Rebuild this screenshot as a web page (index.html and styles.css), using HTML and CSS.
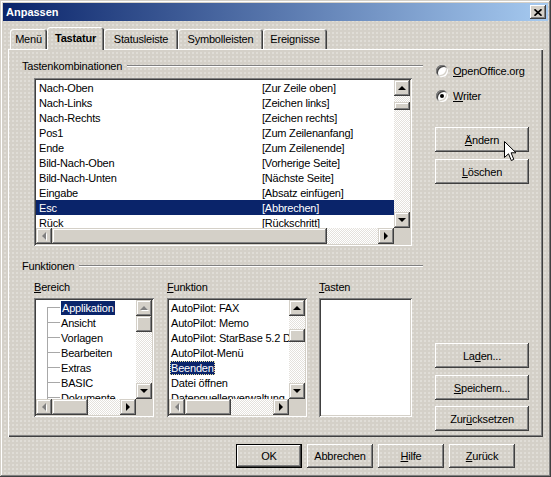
FILE: index.html
```html
<!DOCTYPE html>
<html lang="de">
<head>
  <meta charset="UTF-8">
  <title>Anpassen</title>
  <link rel="stylesheet" href="styles.css">
</head>
<body>
  <div class="window">
    <div class="titlebar">
      <span class="title">Anpassen</span>
      <span class="close">
        <svg width="8" height="7" viewBox="0 0 8 7"><path d="M0.5 0.3L7.5 6.7M7.5 0.3L0.5 6.7" stroke="#000" stroke-width="1.7" fill="none"/></svg>
      </span>
    </div>

    <div class="body">
      <div class="tabs">
        <div class="tab t-menu">Menü</div>
        <div class="tab t-tast active">Tastatur</div>
        <div class="tab t-status">Statusleiste</div>
        <div class="tab t-symbol">Symbolleisten</div>
        <div class="tab t-event">Ereignisse</div>
      </div>

      <div class="panel">
        <div class="section upper">
          <div class="main">
            <div class="group-title"><span>Tastenkombinationen</span><span class="rule"></span></div>
            <div class="listbox keylist">
              <div class="rows">
                <div class="row"><span class="key">Nach-Oben</span><span>[Zur Zeile oben]</span></div>
                <div class="row"><span class="key">Nach-Links</span><span>[Zeichen links]</span></div>
                <div class="row"><span class="key">Nach-Rechts</span><span>[Zeichen rechts]</span></div>
                <div class="row"><span class="key">Pos1</span><span>[Zum Zeilenanfang]</span></div>
                <div class="row"><span class="key">Ende</span><span>[Zum Zeilenende]</span></div>
                <div class="row"><span class="key">Bild-Nach-Oben</span><span>[Vorherige Seite]</span></div>
                <div class="row"><span class="key">Bild-Nach-Unten</span><span>[Nächste Seite]</span></div>
                <div class="row"><span class="key">Eingabe</span><span>[Absatz einfügen]</span></div>
                <div class="row sel"><span class="key">Esc</span><span>[Abbrechen]</span></div>
                <div class="row"><span class="key">Rück</span><span>[Rückschritt]</span></div>
              </div>
              <div class="vscroll">
                <span class="sbtn"><i class="arrow up"></i></span>
                <span class="track"><span class="thumb" style="height:8px;margin-top:6px"></span></span>
                <span class="sbtn"><i class="arrow down"></i></span>
              </div>
              <div class="hscroll">
                <span class="sbtn"><i class="arrow left off"></i></span>
                <span class="track"><span class="thumb" style="width:275px"></span></span>
                <span class="sbtn"><i class="arrow right"></i></span>
              </div>
              <div class="corner"></div>
            </div>
          </div>

          <div class="side">
            <div class="radio first"><span class="circle"></span><span><u>O</u>penOffice.org</span></div>
            <div class="radio second"><span class="circle"><span class="dot"></span></span><span><u>W</u>riter</span></div>
            <div class="btn b-change"><span><u>Ä</u>ndern</span></div>
            <div class="btn b-delete"><span><u>L</u>öschen</span></div>
          </div>
        </div>

        <div class="section lower">
          <div class="main">
            <div class="group-title"><span>Funktionen</span><span class="rule"></span></div>
            <div class="cols">
              <div class="col c-area">
                <div class="label"><u>B</u>ereich</div>
                <div class="listbox small tree">
                  <div class="rows">
                    <div class="row"><span class="hl">Applikation</span></div>
                    <div class="row"><span>Ansicht</span></div>
                    <div class="row"><span>Vorlagen</span></div>
                    <div class="row"><span>Bearbeiten</span></div>
                    <div class="row"><span>Extras</span></div>
                    <div class="row"><span>BASIC</span></div>
                    <div class="row"><span>Dokumente</span></div>
                  </div>
                  <div class="vscroll">
                    <span class="sbtn"><i class="arrow up off"></i></span>
                    <span class="track"><span class="thumb" style="height:16px"></span></span>
                    <span class="sbtn"><i class="arrow down"></i></span>
                  </div>
                  <div class="hscroll">
                    <span class="sbtn"><i class="arrow left off"></i></span>
                    <span class="track"><span class="thumb" style="width:36px"></span></span>
                    <span class="sbtn"><i class="arrow right"></i></span>
                  </div>
                  <div class="corner"></div>
                </div>
              </div>

              <div class="col c-func">
                <div class="label"><u>F</u>unktion</div>
                <div class="listbox small funcs">
                  <div class="rows">
                    <div class="row"><span>AutoPilot: FAX</span></div>
                    <div class="row"><span>AutoPilot: Memo</span></div>
                    <div class="row"><span>AutoPilot: StarBase 5.2 Datenbank</span></div>
                    <div class="row"><span>AutoPilot-Menü</span></div>
                    <div class="row"><span class="hl focus">Beenden</span></div>
                    <div class="row"><span>Datei öffnen</span></div>
                    <div class="row"><span>Datenquellenverwaltung</span></div>
                  </div>
                  <div class="vscroll">
                    <span class="sbtn"><i class="arrow up"></i></span>
                    <span class="track"><span class="thumb" style="height:13px;margin-top:13px"></span></span>
                    <span class="sbtn"><i class="arrow down"></i></span>
                  </div>
                  <div class="hscroll">
                    <span class="sbtn"><i class="arrow left off"></i></span>
                    <span class="track"><span class="thumb" style="width:46px"></span></span>
                    <span class="sbtn"><i class="arrow right"></i></span>
                  </div>
                  <div class="corner"></div>
                </div>
              </div>

              <div class="col c-keys">
                <div class="label"><u>T</u>asten</div>
                <div class="listbox small empty"></div>
              </div>
            </div>
          </div>

          <div class="side">
            <div class="btn b-load"><span>La<u>d</u>en...</span></div>
            <div class="btn b-save"><span><u>S</u>peichern...</span></div>
            <div class="btn b-reset"><span>Zur<u>ü</u>cksetzen</span></div>
          </div>
        </div>
      </div>

      <div class="footer">
        <div class="btn default">OK</div>
        <div class="btn">Abbrechen</div>
        <div class="btn"><span><u>H</u>ilfe</span></div>
        <div class="btn"><span><u>Z</u>urück</span></div>
      </div>
    </div>

    <svg class="cursor" width="13" height="21" viewBox="0 0 13 21">
      <polygon points="0.5,0.5 0.5,16.5 4.5,12.8 7.3,19.5 9.8,18.4 7.1,11.8 12,11.8" fill="#fff" stroke="#000" stroke-width="1"/>
    </svg>
  </div>
</body>
</html>
```

FILE: styles.css
```css
* { box-sizing: border-box; }

body {
  margin: 0;
  font-family: "Liberation Sans", Arial, sans-serif;
  font-size: 11px;
  letter-spacing: -0.2px;
  color: #000;
  background: #d4d0c8;
}

u {
  text-decoration: underline;
  text-underline-offset: 1px;
}

.window {
  position: relative;
  width: 551px;
  height: 477px;
  padding: 3px;
  background-color: #d4d0c8;
  background-image: radial-gradient(circle at 1px 1px, #e0ddd7 0.7px, transparent 1px);
  background-size: 4px 4px;
  box-shadow: inset -1px -1px #404040, inset 1px 1px #d4d0c8, inset -2px -2px #808080, inset 2px 2px #fff;
}

.titlebar {
  height: 18px;
  display: flex;
  align-items: center;
  justify-content: space-between;
  padding: 0 2px 0 3px;
  background: linear-gradient(90deg, #0a246a, #a6caf0);
  color: #fff;
  font-weight: bold;
  letter-spacing: 0;
}

.close {
  width: 16px;
  height: 14px;
  display: flex;
  align-items: center;
  justify-content: center;
  background: #d4d0c8;
  box-shadow: inset -1px -1px #404040, inset 1px 1px #fff, inset -2px -2px #808080;
}

.body { padding: 6px 5px 0; }

/* tabs */
.tabs {
  position: relative;
  z-index: 1;
  display: flex;
  align-items: flex-end;
  height: 22px;
  padding-left: 2px;
}
.tab {
  height: 20px;
  display: flex;
  align-items: center;
  justify-content: center;
  border-radius: 3px 3px 0 0;
  box-shadow: inset 1px 1px #fff, inset -1px 0 #404040, inset -2px 0 #808080;
}
.tab.active {
  height: 23px;
  margin-bottom: -1px;
  padding-bottom: 2px;
  font-weight: bold;
  background-color: #d4d0c8;
  background-image: radial-gradient(circle at 1px 1px, #e0ddd7 0.7px, transparent 1px);
  background-size: 4px 4px;
}
.t-menu { width: 37px; }
.t-tast { width: 57px; }
.t-status { width: 74px; }
.t-symbol { width: 85px; }
.t-event { width: 64px; }

.panel {
  height: 388px;
  padding: 11px 0 0 14px;
  box-shadow: inset 1px 1px #fff, inset -1px -1px #404040, inset -2px -2px #808080;
}

.section { display: flex; }
.lower { margin-top: 14px; }
.main { width: 403px; }

.group-title {
  display: flex;
  align-items: center;
  height: 12px;
}
.rule {
  flex: 1;
  height: 2px;
  margin: 0 2px 0 5px;
  border-top: 1px solid #808080;
  border-bottom: 1px solid #fff;
}

/* list boxes */
.listbox {
  display: grid;
  grid-template-columns: 1fr 16px;
  grid-template-rows: 1fr 16px;
  padding: 2px;
  background: #fff;
  box-shadow: inset 1px 1px #808080, inset -1px -1px #fff, inset 2px 2px #404040, inset -2px -2px #d4d0c8;
}
.keylist {
  width: 378px;
  height: 168px;
  margin: 6px 0 0 12px;
}
.rows {
  overflow: hidden;
  min-width: 0;
  min-height: 0;
}
.row {
  display: flex;
  align-items: center;
  height: 15px;
  white-space: nowrap;
}
.keylist .row { padding-left: 3px; }
.key { width: 223px; }
.row.sel {
  background: #0a246a;
  color: #fff;
}

.vscroll {
  display: flex;
  flex-direction: column;
}
.hscroll { display: flex; }
.sbtn {
  flex: none;
  width: 16px;
  height: 16px;
  display: flex;
  align-items: center;
  justify-content: center;
  background: #d4d0c8;
  box-shadow: inset -1px -1px #404040, inset 1px 1px #d4d0c8, inset -2px -2px #808080, inset 2px 2px #fff;
}
.track {
  flex: 1;
  display: flex;
  background: repeating-conic-gradient(#e4e1dc 0 25%, #fff 0 50%) 0 0 / 2px 2px;
}
.vscroll .track { flex-direction: column; }
.thumb {
  flex: none;
  background: #d4d0c8;
  box-shadow: inset -1px -1px #404040, inset 1px 1px #d4d0c8, inset -2px -2px #808080, inset 2px 2px #fff;
}
.vscroll .thumb { width: 16px; }
.hscroll .thumb { height: 16px; }
.corner { background: #d4d0c8; }

.arrow {
  width: 0;
  height: 0;
  border: 4px solid transparent;
  color: #000;
}
.arrow.up { border-top-width: 0; border-bottom-color: currentColor; }
.arrow.down { border-bottom-width: 0; border-top-color: currentColor; }
.arrow.left { border-left-width: 0; border-right-color: currentColor; margin-left: -1px; }
.arrow.right { border-right-width: 0; border-left-color: currentColor; }
.arrow.off {
  color: #808080;
  filter: drop-shadow(1px 1px 0 #fff);
}

/* right column */
.side {
  width: 94px;
  margin-left: 10px;
  display: flex;
  flex-direction: column;
}
.radio {
  display: flex;
  align-items: center;
  gap: 5px;
  height: 16px;
  padding-left: 1px;
}
.radio.first { margin-top: 3px; }
.radio.second { margin-top: 9px; }
.circle {
  width: 12px;
  height: 12px;
  display: flex;
  align-items: center;
  justify-content: center;
  border-radius: 50%;
  background: #fff;
  box-shadow: inset 1px 1px #808080, inset -1px -1px #fff, inset 2px 2px #404040, inset -2px -2px #d4d0c8;
}
.dot {
  width: 4px;
  height: 4px;
  border-radius: 50%;
  background: #000;
}

.btn {
  height: 25px;
  display: flex;
  align-items: center;
  justify-content: center;
  box-shadow: inset -1px -1px #404040, inset 1px 1px #fff, inset -2px -2px #808080;
}
.b-change { margin-top: 23px; }
.b-delete { margin-top: 7px; }
.b-load { margin-top: 83px; }
.b-save { margin-top: 7px; }
.b-reset { margin-top: 6px; }

/* lower lists */
.cols {
  display: flex;
  margin: 9px 0 0 12px;
}
.label {
  height: 12px;
  line-height: 12px;
}
.col .listbox { height: 119px; margin-top: 5px; }
.c-area { width: 120px; }
.c-func { width: 140px; margin-left: 13px; }
.c-keys { width: 93px; margin-left: 12px; }
.listbox.empty { display: block; }

.hl {
  display: block;
  line-height: 14px;
  padding: 0 1px;
  background: #0a246a;
  color: #fff;
}
.hl.focus { outline: 1px dotted #e8e0a0; outline-offset: -1px; }

.tree .row {
  padding-left: 25px;
  background:
    linear-gradient(#a8a8a8, #a8a8a8) 11px 0 / 1px 100% no-repeat,
    linear-gradient(#a8a8a8, #a8a8a8) 11px 7px / 13px 1px no-repeat;
}
.tree .row:first-child {
  background-position: 11px 7px, 11px 7px;
  background-size: 1px 8px, 13px 1px;
}
.funcs .row { padding-left: 1px; }
.funcs .row span:not(.hl) { padding-left: 1px; }

/* bottom buttons */
.footer {
  display: flex;
  justify-content: flex-end;
  gap: 5px;
  margin-top: 7px;
  padding-right: 28px;
}
.footer .btn {
  width: 66px;
  height: 24px;
}
.footer .btn.default {
  box-shadow: inset 0 0 0 1px #000, inset -2px -2px #404040, inset 2px 2px #fff, inset -3px -3px #808080;
}

.cursor {
  position: absolute;
  left: 504px;
  top: 141px;
}
```
